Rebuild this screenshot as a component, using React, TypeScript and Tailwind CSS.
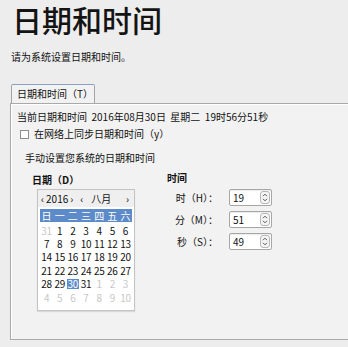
import React from "react";

const rows: { d: string; faint?: boolean; sel?: boolean }[][] = [
  [{ d: "31", faint: true }, { d: "1" }, { d: "2" }, { d: "3" }, { d: "4" }, { d: "5" }, { d: "6" }],
  ["7", "8", "9", "10", "11", "12", "13"].map((d) => ({ d })),
  ["14", "15", "16", "17", "18", "19", "20"].map((d) => ({ d })),
  ["21", "22", "23", "24", "25", "26", "27"].map((d) => ({ d })),
  [
    { d: "28" },
    { d: "29" },
    { d: "30", sel: true },
    { d: "31" },
    { d: "1", faint: true },
    { d: "2", faint: true },
    { d: "3", faint: true },
  ],
  ["4", "5", "6", "7", "8", "9", "10"].map((d) => ({ d, faint: true })),
];

function SpinBox({ value }: { value: string }) {
  return (
    <div className="flex h-[17px] w-[43px] items-center rounded-[2px] border border-[#a7a7a7] bg-white shadow-[inset_0_1px_1px_rgba(0,0,0,0.08)]">
      <span className="flex-1 pl-[3px] text-[10px] leading-none">{value}</span>
      <div className="mr-[1px] flex h-[13px] w-[10px] items-center justify-center rounded-[3px] border border-[#b8b8b8] bg-[#f4f4f4]">
        <svg width="6" height="9" viewBox="0 0 6 9" fill="none" stroke="#555" strokeWidth="1">
          <path d="M1 3.2 3 1.2 5 3.2" />
          <path d="M1 5.8 3 7.8 5 5.8" />
        </svg>
      </div>
    </div>
  );
}

export default function App() {
  return (
    <div className="h-[347px] w-[348px] overflow-hidden bg-[#ededed] font-['Noto_Sans_CJK_SC','Noto_Sans',sans-serif] text-[#111]">
      <h1 className="pl-[12px] pt-[1px] text-[30px] font-medium leading-[37px] text-[#141414]">日期和时间</h1>
      <p className="mt-[13px] pl-[11px] text-[10px] leading-[12px]">请为系统设置日期和时间。</p>

      {/* tabs */}
      <div className="mt-[16px] pl-[11px]">
        <div className="relative z-10 -mb-[1px] inline-flex h-[19px] w-[84px] items-center rounded-t-[2px] border border-b-0 border-[#a5a5a5] border-t-[#8aa0c0] bg-[#f2f2f2] pl-[5px] text-[10px]">
          日期和时间（T）
        </div>
        <div className="ml-[-1px] h-[237px] w-[350px] border border-[#a9a9a9] bg-[#f2f2f2] shadow-[inset_1px_1px_0_#fff]">
          <p className="mt-[6px] pl-[6px] text-[10px] leading-[14px] whitespace-nowrap">
            当前日期和时间&nbsp;&nbsp;2016年08月30日&nbsp;&nbsp;星期二&nbsp;&nbsp;19时56分51秒
          </p>
          <label className="mt-[3px] flex items-center gap-[5px] pl-[9px] text-[10px] leading-[14px]">
            <span className="h-[9px] w-[9px] border border-[#8e8e8e] bg-white" />
            在网络上同步日期和时间（y）
          </label>

          <p className="mt-[10px] pl-[14px] text-[10px] leading-[14px]">手动设置您系统的日期和时间</p>

          <div className="mt-[8px] flex">
            {/* date column */}
            <div className="pl-[21px]">
              <p className="text-[10px] font-bold leading-[14px]">日期（D）</p>
              <div className="mt-[2px] ml-[5px] h-[122px] w-[98px] border border-[#c4c4c4] bg-white shadow-[0_1px_1px_rgba(0,0,0,0.1)]">
                <div className="flex h-[17px] items-center bg-[#efefef] px-[3px] text-[10px] leading-none">
                  <span>‹</span>
                  <span className="px-[2px]">2016</span>
                  <span>›</span>
                  <span className="ml-[7px]">‹</span>
                  <span className="ml-[8px]">八月</span>
                  <span className="ml-auto mr-[2px]">›</span>
                </div>
                <div className="mx-[2px] mt-[2px] grid h-[13px] grid-cols-7 items-center bg-[#5d8bca] text-center text-[10px] leading-none text-white">
                  {["日", "一", "二", "三", "四", "五", "六"].map((w) => (
                    <span key={w}>{w}</span>
                  ))}
                </div>
                <div className="mx-[2px] mt-[2px]">
                  {rows.map((r, i) => (
                    <div key={i} className="grid h-[13.4px] grid-cols-7 items-center text-center text-[10px] leading-none tracking-[-0.3px]">
                      {r.map((c, j) => (
                        <span key={j} className="flex justify-center">
                          <span
                            className={
                              c.sel
                                ? "bg-[#5d8bca] px-[1px] text-white"
                                : c.faint
                                ? "text-[#c8c8c8]"
                                : "text-[#111]"
                            }
                          >
                            {c.d}
                          </span>
                        </span>
                      ))}
                    </div>
                  ))}
                </div>
              </div>
            </div>

            {/* time column */}
            <div className="ml-[32px]">
              <p className="-mt-[2px] text-[10px] font-bold leading-[14px]">时间</p>
              <div className="mt-[4px] flex flex-col gap-[5px]">
                {[
                  ["时（H）：", "19"],
                  ["分（M）：", "51"],
                  ["秒（S）：", "49"],
                ].map(([l, v]) => (
                  <div key={l} className="flex items-center">
                    <span className="w-[51px] text-right text-[10px] leading-none whitespace-nowrap">{l}</span>
                    <span className="ml-[11px]">
                      <SpinBox value={v} />
                    </span>
                  </div>
                ))}
              </div>
            </div>
          </div>
        </div>
      </div>
    </div>
  );
}
